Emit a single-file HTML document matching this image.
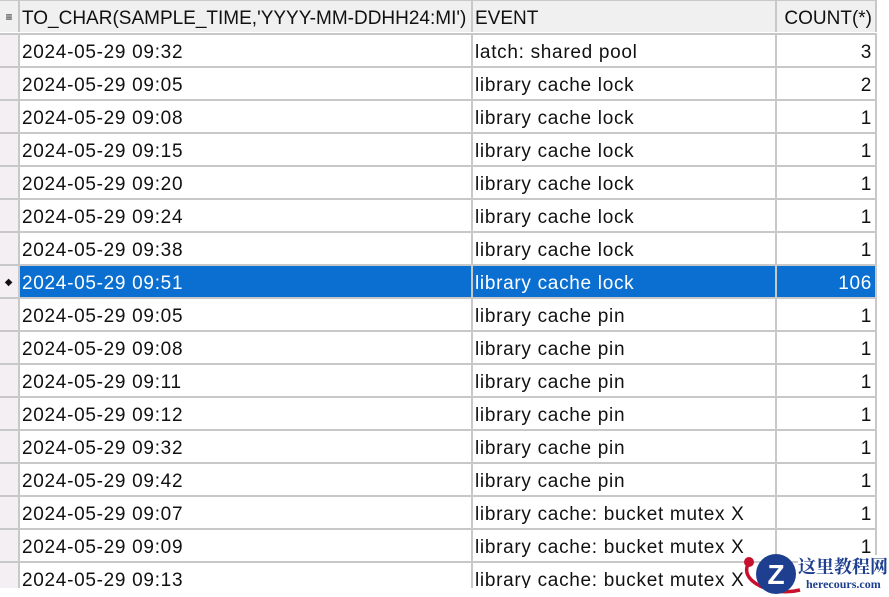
<!DOCTYPE html>
<html><head><style>
body{margin:0;width:889px;height:597px;background:#fff;overflow:hidden;position:relative;font-family:"Liberation Sans",sans-serif;font-size:19px;color:#111}
.r{position:absolute;left:0;width:877px;height:33px;border-bottom:2px solid #c8c8c8;box-sizing:border-box}
.c{position:absolute;top:0;height:31px;line-height:36px;box-sizing:border-box;border-right:2px solid #c8c8c8;white-space:nowrap;overflow:hidden;letter-spacing:0.7px}
.i{left:0;width:20px;background:#f3eff3}
.a{left:20px;width:453px;padding-left:2px}
.b{left:473px;width:304px;padding-left:2px}
.n{left:777px;width:100px;text-align:right;padding-right:3px;border-right:2px solid #c8c8c8}
.h .c{background:#f0f0f0;letter-spacing:0;line-height:36px}
.s .a,.s .b,.s .n{background:#0a6fd0;color:#fff}
</style></head><body>
<div class="r h" style="top:0;height:35px;border-top:1px solid #c8c8c8"><div class="c i" style="font-size:12px;text-align:center;line-height:33px">≡</div><div class="c a">TO_CHAR(SAMPLE_TIME,'YYYY-MM-DDHH24:MI')</div><div class="c b">EVENT</div><div class="c n">COUNT(*)</div></div>
<div class="r" style="top:35px"><div class="c i"></div><div class="c a">2024-05-29 09:32</div><div class="c b">latch: shared pool</div><div class="c n">3</div></div>
<div class="r" style="top:68px"><div class="c i"></div><div class="c a">2024-05-29 09:05</div><div class="c b">library cache lock</div><div class="c n">2</div></div>
<div class="r" style="top:101px"><div class="c i"></div><div class="c a">2024-05-29 09:08</div><div class="c b">library cache lock</div><div class="c n">1</div></div>
<div class="r" style="top:134px"><div class="c i"></div><div class="c a">2024-05-29 09:15</div><div class="c b">library cache lock</div><div class="c n">1</div></div>
<div class="r" style="top:167px"><div class="c i"></div><div class="c a">2024-05-29 09:20</div><div class="c b">library cache lock</div><div class="c n">1</div></div>
<div class="r" style="top:200px"><div class="c i"></div><div class="c a">2024-05-29 09:24</div><div class="c b">library cache lock</div><div class="c n">1</div></div>
<div class="r" style="top:233px"><div class="c i"></div><div class="c a">2024-05-29 09:38</div><div class="c b">library cache lock</div><div class="c n">1</div></div>
<div class="r s" style="top:266px"><div class="c i" style="text-align:center;font-size:10px;line-height:33px">◆</div><div class="c a">2024-05-29 09:51</div><div class="c b">library cache lock</div><div class="c n">106</div></div>
<div class="r" style="top:299px"><div class="c i"></div><div class="c a">2024-05-29 09:05</div><div class="c b">library cache pin</div><div class="c n">1</div></div>
<div class="r" style="top:332px"><div class="c i"></div><div class="c a">2024-05-29 09:08</div><div class="c b">library cache pin</div><div class="c n">1</div></div>
<div class="r" style="top:365px"><div class="c i"></div><div class="c a">2024-05-29 09:11</div><div class="c b">library cache pin</div><div class="c n">1</div></div>
<div class="r" style="top:398px"><div class="c i"></div><div class="c a">2024-05-29 09:12</div><div class="c b">library cache pin</div><div class="c n">1</div></div>
<div class="r" style="top:431px"><div class="c i"></div><div class="c a">2024-05-29 09:32</div><div class="c b">library cache pin</div><div class="c n">1</div></div>
<div class="r" style="top:464px"><div class="c i"></div><div class="c a">2024-05-29 09:42</div><div class="c b">library cache pin</div><div class="c n">1</div></div>
<div class="r" style="top:497px"><div class="c i"></div><div class="c a">2024-05-29 09:07</div><div class="c b">library cache: bucket mutex X</div><div class="c n">1</div></div>
<div class="r" style="top:530px"><div class="c i"></div><div class="c a">2024-05-29 09:09</div><div class="c b">library cache: bucket mutex X</div><div class="c n">1</div></div>
<div class="r" style="top:563px;height:25px;border-bottom:none;overflow:hidden"><div class="c i" style="height:25px"></div><div class="c a" style="height:25px">2024-05-29 09:13</div><div class="c b" style="height:25px">library cache: bucket mutex X</div><div class="c n" style="height:25px"></div></div>
<svg style="position:absolute;left:740px;top:552px" width="62" height="45"><path d="M9 10 Q1 24 20 34 Q40 43 60 38" fill="none" stroke="#c8102e" stroke-width="3.5"/><circle cx="9" cy="10" r="5" fill="#c8102e"/><circle cx="36" cy="22" r="20" fill="#1e3f8f"/><text x="36" y="32" font-family="Liberation Sans" font-weight="bold" font-size="28" fill="#fff" text-anchor="middle">Z</text></svg>
<div style="position:absolute;left:798px;top:555px;font-family:'Noto Serif CJK SC',serif;font-weight:bold;font-size:18px;color:#1e3f8f;background:#fff;line-height:22px">这里教程网</div>
<div style="position:absolute;left:806px;top:577px;font-family:'Liberation Serif',serif;font-weight:bold;font-size:12px;color:#1e3f8f;background:#fff">herecours.com</div>
</body></html>
